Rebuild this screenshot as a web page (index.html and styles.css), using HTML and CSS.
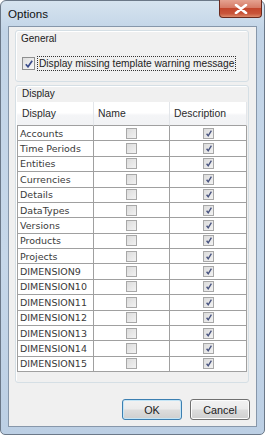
FILE: index.html
```html
<!DOCTYPE html>
<html lang="en">

<head>
    <meta charset="UTF-8">
    <title>Options</title>
    <link rel="stylesheet" href="styles.css">
</head>

<body>
    <div class="window">
        <div class="titlebar">
            <span class="title">Options</span>
            <span class="close">
                <svg width="14" height="10" viewBox="0 0 14 10">
                    <path d="M2 1 L12 9 M12 1 L2 9" stroke="#ffffff" stroke-width="2.6" stroke-linecap="round" fill="none"/>
                </svg>
            </span>
        </div>

        <div class="client">
            <div class="group general">
                <div class="legend">General</div>
                <label class="check-row">
                    <span class="box big checked"></span>
                    <span class="focus">Display missing template warning message</span>
                </label>
            </div>

            <div class="group display">
                <div class="legend">Display</div>
                <div class="grid">
                    <div class="row head">
                        <div class="cell">Display</div>
                        <div class="cell">Name</div>
                        <div class="cell">Description</div>
                    </div>
                    <div class="row"><div class="cell">Accounts</div><div class="cell"><span class="box"></span></div><div class="cell"><span class="box checked"></span></div></div>
                    <div class="row"><div class="cell">Time Periods</div><div class="cell"><span class="box"></span></div><div class="cell"><span class="box checked"></span></div></div>
                    <div class="row"><div class="cell">Entities</div><div class="cell"><span class="box"></span></div><div class="cell"><span class="box checked"></span></div></div>
                    <div class="row"><div class="cell">Currencies</div><div class="cell"><span class="box"></span></div><div class="cell"><span class="box checked"></span></div></div>
                    <div class="row"><div class="cell">Details</div><div class="cell"><span class="box"></span></div><div class="cell"><span class="box checked"></span></div></div>
                    <div class="row"><div class="cell">DataTypes</div><div class="cell"><span class="box"></span></div><div class="cell"><span class="box checked"></span></div></div>
                    <div class="row"><div class="cell">Versions</div><div class="cell"><span class="box"></span></div><div class="cell"><span class="box checked"></span></div></div>
                    <div class="row"><div class="cell">Products</div><div class="cell"><span class="box"></span></div><div class="cell"><span class="box checked"></span></div></div>
                    <div class="row"><div class="cell">Projects</div><div class="cell"><span class="box"></span></div><div class="cell"><span class="box checked"></span></div></div>
                    <div class="row"><div class="cell">DIMENSION9</div><div class="cell"><span class="box"></span></div><div class="cell"><span class="box checked"></span></div></div>
                    <div class="row"><div class="cell">DIMENSION10</div><div class="cell"><span class="box"></span></div><div class="cell"><span class="box checked"></span></div></div>
                    <div class="row"><div class="cell">DIMENSION11</div><div class="cell"><span class="box"></span></div><div class="cell"><span class="box checked"></span></div></div>
                    <div class="row"><div class="cell">DIMENSION12</div><div class="cell"><span class="box"></span></div><div class="cell"><span class="box checked"></span></div></div>
                    <div class="row"><div class="cell">DIMENSION13</div><div class="cell"><span class="box"></span></div><div class="cell"><span class="box checked"></span></div></div>
                    <div class="row"><div class="cell">DIMENSION14</div><div class="cell"><span class="box"></span></div><div class="cell"><span class="box checked"></span></div></div>
                    <div class="row"><div class="cell">DIMENSION15</div><div class="cell"><span class="box"></span></div><div class="cell"><span class="box checked"></span></div></div>
                </div>
            </div>

            <div class="buttons">
                <button class="btn default">OK</button>
                <button class="btn">Cancel</button>
            </div>
        </div>
    </div>
</body>

</html>
```

FILE: styles.css
```css
body {
    margin: 0;
    background: #ffffff;
    font-family: 'Liberation Sans', Arial, sans-serif;
    font-size: 10px;
    color: #222;
}

.window {
    box-sizing: border-box;
    width: 265px;
    height: 435px;
    border: 1px solid #6b7888;
    border-radius: 6px 6px 5px 5px;
    background: linear-gradient(180deg, #d6e3ef 0%, #c2d4e7 30px, #c6d7e9 60%, #bccfe4 100%);
    display: flex;
    flex-direction: column;
    padding: 0 7px 7px 7px;
}

.titlebar {
    height: 25px;
    display: flex;
    align-items: flex-start;
    justify-content: space-between;
    position: relative;
}

.title {
    font-size: 11.6px;
    color: #111;
    margin-top: 6px;
}

.close {
    position: absolute;
    right: -5px;
    top: -1px;
    width: 43px;
    height: 18px;
    box-sizing: border-box;
    border: 1px solid #6a2a1e;
    border-top: none;
    border-radius: 0 0 4px 4px;
    background: linear-gradient(180deg, #e5a290 0%, #d67b66 45%, #c3462c 50%, #c9553a 80%, #dc8a6b 100%);
    display: flex;
    align-items: center;
    justify-content: center;
}

.client {
    flex: 1;
    border: 1px solid #8797aa;
    background: #f0f0f0;
    display: flex;
    flex-direction: column;
    padding: 3px 7px 0 6px;
}

.group {
    border: 1px solid #d5dfe5;
    border-radius: 3px;
    box-shadow: inset 1px 1px 0 #ffffff;
}

.legend {
    font-size: 10px;
    line-height: 15px;
    padding-left: 5px;
    color: #222;
}

.general {
    height: 50px;
}

.check-row {
    display: flex;
    align-items: center;
    margin: 10px 0 0 6px;
}

.focus {
    font-size: 10.2px;
    line-height: 13px;
    border: 1px dotted #333;
    padding: 0 1px;
    margin-left: 2px;
    white-space: nowrap;
}

.display {
    margin-top: 3px;
    padding: 0 1px 10px 1px;
}

.display .legend {
    line-height: 15px;
}

.grid {
    margin-top: 1px;
    width: 230px;
    background: #ffffff;
}

.row {
    display: grid;
    grid-template-columns: 77px 76px 77px;
    height: 15.375px;
    font-family: 'DejaVu Sans', sans-serif;
    font-size: 9.5px;
    color: #3a3a3a;
}

.row .cell {
    box-sizing: border-box;
    border-right: 1px solid #a0a0a0;
    border-bottom: 1px solid #a0a0a0;
    display: flex;
    align-items: center;
    justify-content: center;
    overflow: hidden;
    white-space: nowrap;
}

.row .cell:first-child {
    border-left: 1px solid #a0a0a0;
    justify-content: flex-start;
    padding-left: 2px;
}

.row.head {
    height: 24px;
    background: linear-gradient(180deg, #ffffff 0%, #ffffff 45%, #f4f5f7 55%, #f1f2f4 100%);
    font-family: 'Liberation Sans', Arial, sans-serif;
    font-size: 10.4px;
}

.row.head .cell {
    justify-content: flex-start;
    padding-left: 4px;
    border-right: 1px solid #e3e6ea;
    border-bottom: 1px solid #a0a0a0;
    color: #2b2b2b;
}

.row.head .cell:first-child {
    border-left: none;
    padding-left: 5px;
}

.box {
    box-sizing: border-box;
    width: 11px;
    height: 11px;
    border: 1px solid #a8a8a8;
    background: linear-gradient(135deg, #dcdcdc 0%, #f2f2f2 100%);
    display: inline-block;
    position: relative;
    flex: none;
}

.box.checked::after {
    content: "";
    position: absolute;
    left: 2px;
    top: 1px;
    width: 6px;
    height: 7px;
    background: url("data:image/svg+xml;utf8,<svg xmlns='http://www.w3.org/2000/svg' width='6' height='7' viewBox='0 0 6 7'><path d='M0.6 3.8 L2.2 5.8 L5.4 0.6' stroke='%234a5580' stroke-width='1.4' fill='none'/></svg>") no-repeat;
}

.box.big {
    width: 13px;
    height: 13px;
    border-color: #8e8f8f;
    background: linear-gradient(135deg, #dedede 0%, #f8f8f8 100%);
}

.box.big.checked::after {
    left: 2px;
    top: 2px;
    width: 8px;
    height: 8px;
    background: url("data:image/svg+xml;utf8,<svg xmlns='http://www.w3.org/2000/svg' width='8' height='8' viewBox='0 0 8 8'><path d='M0.8 4.2 L3 6.8 L7.2 0.8' stroke='%233b4d8c' stroke-width='1.7' fill='none'/></svg>") no-repeat;
}

.buttons {
    display: flex;
    justify-content: flex-end;
    gap: 8px;
    margin-top: 16px;
    margin-right: -1px;
}

.btn {
    width: 60px;
    height: 21px;
    box-sizing: border-box;
    border: 1px solid #707070;
    border-radius: 3px;
    background: linear-gradient(180deg, #f2f2f2 0%, #ebebeb 48%, #dddddd 52%, #cfcfcf 100%);
    box-shadow: inset 0 0 0 1px #fcfcfc;
    font-family: 'Liberation Sans', Arial, sans-serif;
    font-size: 10.8px;
    color: #1b1b1b;
    padding: 0;
}

.btn.default {
    border-color: #3c7fb1;
    box-shadow: inset 0 0 0 1px #c4e5f6;
}
```
